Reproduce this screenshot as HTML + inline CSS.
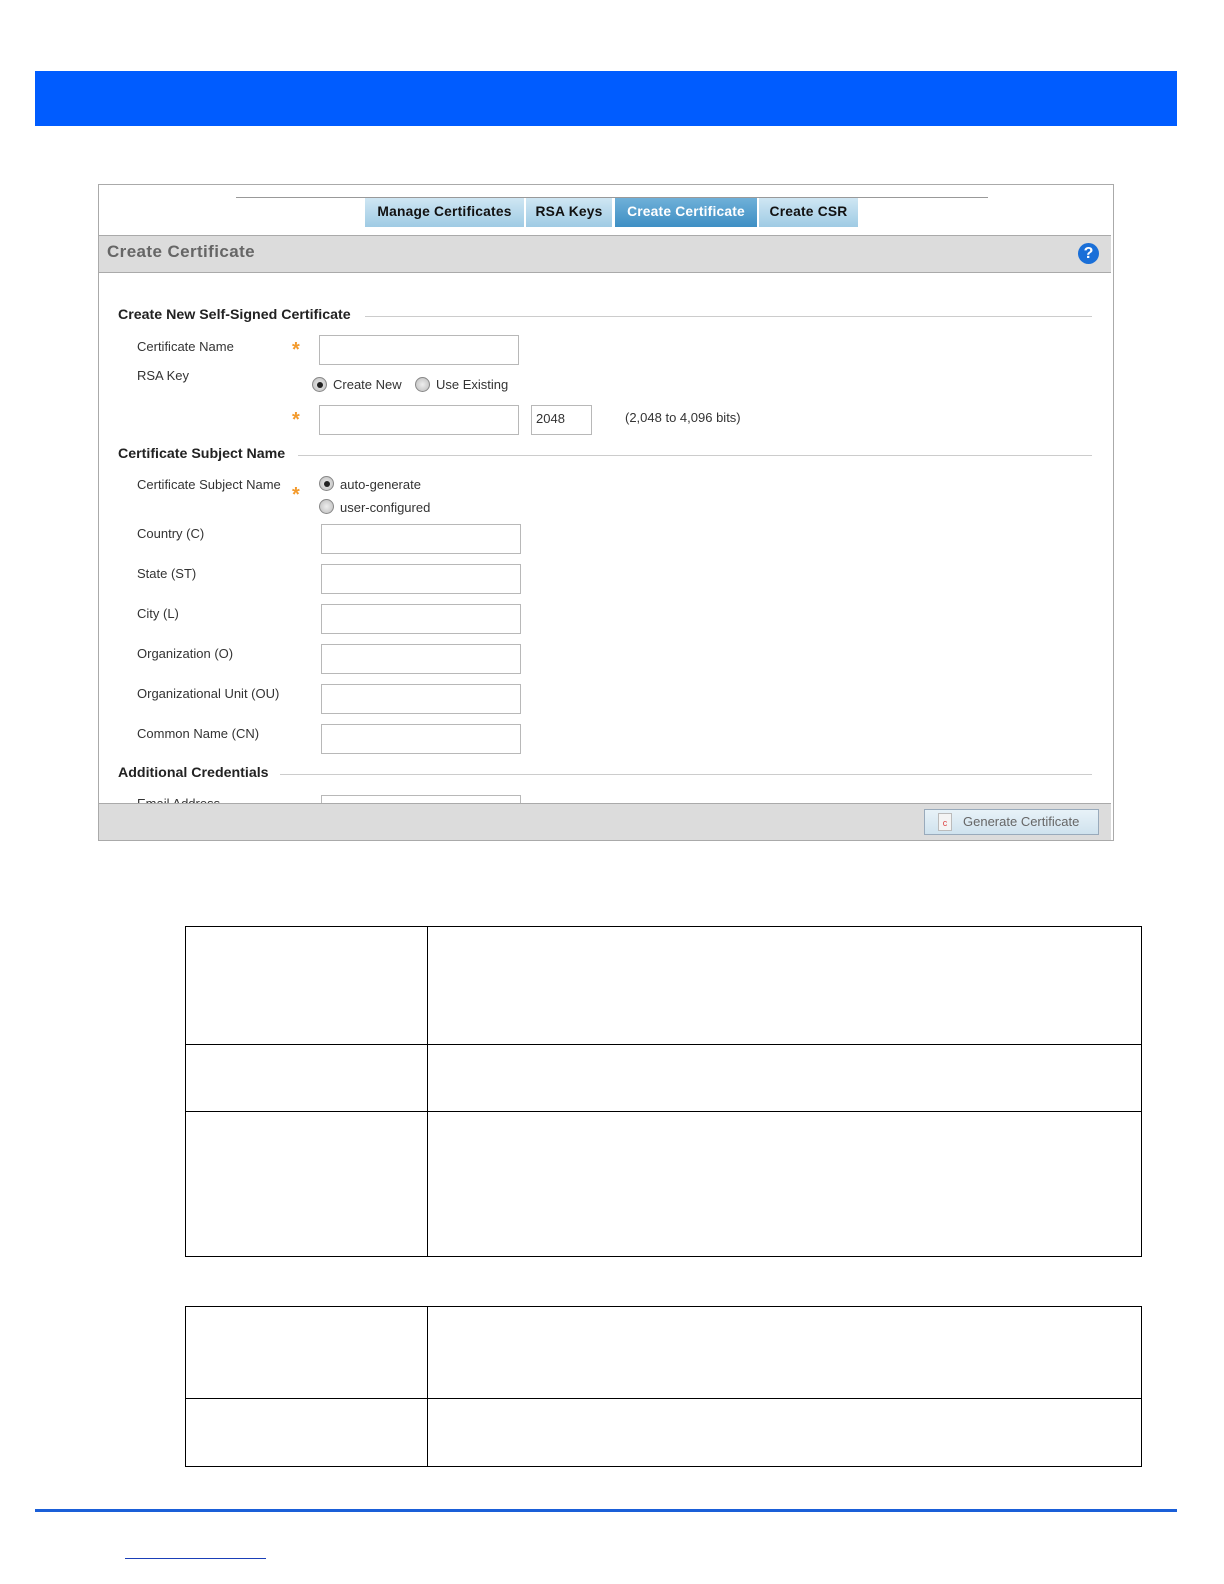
<!DOCTYPE html>
<html><head><style>
body{margin:0;width:1224px;height:1584px;position:relative;background:#fff;font-family:"Liberation Sans",sans-serif;overflow:hidden}
.a{position:absolute}
.lbl{position:absolute;font-size:13px;color:#333}
.sec{position:absolute;font-size:14.2px;font-weight:bold;color:#222}
.hr{position:absolute;height:1px;background:#ccc}
.in{position:absolute;border:1px solid #b8b8b8;background:#fff;height:28px;width:198px}
.tab{position:absolute;top:198px;height:29px;background:linear-gradient(#cfe6f3,#9fcbe4);font-size:13.8px;font-weight:bold;color:#111;text-align:center;line-height:27px;letter-spacing:0.2px}
.star{position:absolute;color:#f39a2c;font-size:20px;font-weight:bold}
.rad{position:absolute;width:13px;height:13px;border-radius:50%;border:1px solid #888;background:radial-gradient(#eee,#bbb)}
.rad.on::after{content:"";position:absolute;left:3.5px;top:3.5px;width:6px;height:6px;border-radius:50%;background:#222}
.tb{position:absolute;border:1px solid #000}
</style></head><body>
<div class="a" style="left:35px;top:71px;width:1142px;height:55px;background:#005cff"></div>

<div class="a" style="left:98px;top:184px;width:1014px;height:655px;border:1px solid #aaa;overflow:hidden">
</div>
<div class="a" style="left:236px;top:197px;width:752px;height:1px;background:#999"></div>
<div class="tab" style="left:365px;width:159px">Manage Certificates</div>
<div class="tab" style="left:526px;width:86px">RSA Keys</div>
<div class="tab" style="left:615px;width:142px;background:linear-gradient(#6fb0d8,#3e8fc4);color:#fff">Create Certificate</div>
<div class="tab" style="left:759px;width:99px">Create CSR</div>

<div class="a" style="left:99px;top:235px;width:1012px;height:36px;background:#dcdcdc;border-top:1px solid #aaa;border-bottom:1px solid #aaa"></div>
<div class="a" style="left:107px;top:242px;font-size:17px;font-weight:bold;color:#666;letter-spacing:0.4px">Create Certificate</div>
<div class="a" style="left:1078px;top:243px;width:21px;height:21px;border-radius:50%;background:#1a6fd8;color:#fff;font-weight:bold;font-size:16px;text-align:center;line-height:21px">?</div>

<div class="sec" style="left:118px;top:307px">Create New Self-Signed Certificate</div>
<div class="hr" style="left:365px;top:316px;width:727px"></div>
<div class="lbl" style="left:137px;top:339px">Certificate Name</div>
<div class="star" style="left:292px;top:339px">*</div>
<div class="in" style="left:319px;top:335px"></div>
<div class="lbl" style="left:137px;top:368px">RSA Key</div>
<div class="rad on" style="left:312px;top:377px"></div>
<div class="lbl" style="left:333px;top:377px">Create New</div>
<div class="rad" style="left:415px;top:377px"></div>
<div class="lbl" style="left:436px;top:377px">Use Existing</div>
<div class="star" style="left:292px;top:409px">*</div>
<div class="in" style="left:319px;top:405px"></div>
<div class="in" style="left:531px;top:405px;width:59px"></div>
<div class="lbl" style="left:536px;top:411px">2048</div>
<div class="lbl" style="left:625px;top:410px">(2,048 to 4,096 bits)</div>

<div class="sec" style="left:118px;top:446px">Certificate Subject Name</div>
<div class="hr" style="left:298px;top:455px;width:794px"></div>
<div class="lbl" style="left:137px;top:477px">Certificate Subject Name</div>
<div class="star" style="left:292px;top:484px">*</div>
<div class="rad on" style="left:319px;top:476px"></div>
<div class="lbl" style="left:340px;top:477px">auto-generate</div>
<div class="rad" style="left:319px;top:499px"></div>
<div class="lbl" style="left:340px;top:500px">user-configured</div>
<div class="lbl" style="left:137px;top:526px">Country (C)</div><div class="in" style="left:321px;top:524px"></div>
<div class="lbl" style="left:137px;top:566px">State (ST)</div><div class="in" style="left:321px;top:564px"></div>
<div class="lbl" style="left:137px;top:606px">City (L)</div><div class="in" style="left:321px;top:604px"></div>
<div class="lbl" style="left:137px;top:646px">Organization (O)</div><div class="in" style="left:321px;top:644px"></div>
<div class="lbl" style="left:137px;top:686px">Organizational Unit (OU)</div><div class="in" style="left:321px;top:684px"></div>
<div class="lbl" style="left:137px;top:726px">Common Name (CN)</div><div class="in" style="left:321px;top:724px"></div>
<div class="sec" style="left:118px;top:765px">Additional Credentials</div>
<div class="hr" style="left:280px;top:774px;width:812px"></div>
<div class="a" style="left:99px;top:790px;width:1012px;height:14px;overflow:hidden">
 <div class="lbl" style="left:38px;top:6px">Email Address</div>
 <div class="in" style="left:222px;top:5px"></div>
</div>
<div class="a" style="left:99px;top:803px;width:1012px;height:36px;background:#dcdcdc;border-top:1px solid #aaa"></div>
<div class="a" style="left:924px;top:809px;width:173px;height:24px;border:1px solid #9ab;background:linear-gradient(#e8f2f8,#cfe2ee)"></div>
<div class="a" style="left:938px;top:813px;width:12px;height:16px;background:#f4f4f4;border:1px solid #bbb;font-size:9px;color:#d44;text-align:center;line-height:18px">c</div>
<div class="a" style="left:963px;top:814px;font-size:13px;color:#666">Generate Certificate</div>

<div class="tb" style="left:185px;top:926px;width:955px;height:329px"></div>
<div class="a" style="left:427px;top:926px;width:1px;height:330px;background:#000"></div>
<div class="a" style="left:185px;top:1044px;width:956px;height:1px;background:#000"></div>
<div class="a" style="left:185px;top:1111px;width:956px;height:1px;background:#000"></div>

<div class="tb" style="left:185px;top:1306px;width:955px;height:159px"></div>
<div class="a" style="left:427px;top:1306px;width:1px;height:160px;background:#000"></div>
<div class="a" style="left:185px;top:1398px;width:956px;height:1px;background:#000"></div>

<div class="a" style="left:35px;top:1509px;width:1142px;height:3px;background:#1a5fd8"></div>
<div class="a" style="left:125px;top:1558px;width:141px;height:1px;background:#1a3fb8"></div>
</body></html>
